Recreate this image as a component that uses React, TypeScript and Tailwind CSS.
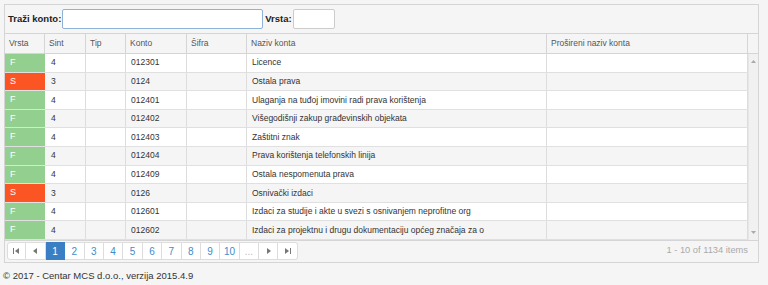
import React from 'react';

interface Konto {
  vrsta: 'F' | 'S';
  sint: string;
  konto: string;
  naziv: string;
}

const rows: Konto[] = [
  { vrsta: 'F', sint: '4', konto: '012301', naziv: 'Licence' },
  { vrsta: 'S', sint: '3', konto: '0124', naziv: 'Ostala prava' },
  { vrsta: 'F', sint: '4', konto: '012401', naziv: 'Ulaganja na tuđoj imovini radi prava korištenja' },
  { vrsta: 'F', sint: '4', konto: '012402', naziv: 'Višegodišnji zakup građevinskih objekata' },
  { vrsta: 'F', sint: '4', konto: '012403', naziv: 'Zaštitni znak' },
  { vrsta: 'F', sint: '4', konto: '012404', naziv: 'Prava korištenja telefonskih linija' },
  { vrsta: 'F', sint: '4', konto: '012409', naziv: 'Ostala nespomenuta prava' },
  { vrsta: 'S', sint: '3', konto: '0126', naziv: 'Osnivački izdaci' },
  { vrsta: 'F', sint: '4', konto: '012601', naziv: 'Izdaci za studije i akte u svezi s osnivanjem neprofitne org' },
  { vrsta: 'F', sint: '4', konto: '012602', naziv: 'Izdaci za projektnu i drugu dokumentaciju općeg značaja za o' },
];

const cols = 'grid grid-cols-[40px_41px_40px_61px_60px_300px_201px]';

const Arrow = ({ dir, bar }: { dir: 'l' | 'r'; bar?: boolean }) => (
  <svg width="7" height="6" viewBox="0 0 7 6" className="fill-[#777]">
    {dir === 'l' ? (
      <>
        {bar && <rect x="0" y="0" width="1" height="6" />}
        <polygon points={bar ? '6,0 6,6 2,3' : '5,0 5,6 1,3'} />
      </>
    ) : (
      <>
        <polygon points={bar ? '1,0 1,6 5,3' : '2,0 2,6 6,3'} />
        {bar && <rect x="6" y="0" width="1" height="6" />}
      </>
    )}
  </svg>
);

const App = () => {
  const pages = ['1', '2', '3', '4', '5', '6', '7', '8', '9', '10', '...'];

  return (
    <div className="w-[768px] h-[285px] bg-[#f5f5f5] pt-[4px] pl-[4px] font-['Liberation_Sans',Arial,sans-serif] text-[#333] overflow-hidden">
      <div className="w-[755px] border border-[#d5d5d5] bg-white">
        {/* toolbar */}
        <div className="h-[29px] bg-[#f5f5f5] border-b border-[#d5d5d5] flex items-center pl-[3px] text-[9.5px] font-bold text-[#222]">
          <span>Traži konto:</span>
          <input className="ml-[1px] w-[201px] h-[20px] bg-white border border-[#8fb3d6] rounded-[2px] outline-none" />
          <span className="ml-[2px]">Vrsta:</span>
          <input className="ml-[1px] w-[42px] h-[20px] bg-white border border-[#ccc] rounded-[2px] outline-none" />
        </div>

        {/* header */}
        <div className="flex h-[20px] bg-[#f5f5f5] border-b border-[#d5d5d5] text-[8.5px] text-[#555]">
          <div className={cols}>
            {['Vrsta', 'Sint', 'Tip', 'Konto', 'Šifra', 'Naziv konta', 'Prošireni naziv konta'].map((h) => (
              <div key={h} className="border-r border-[#d5d5d5] pl-[4px] flex items-center">
                {h}
              </div>
            ))}
          </div>
          <div className="w-[10px]" />
        </div>

        {/* body */}
        <div className="flex">
          <div>
            {rows.map((r, i) => (
              <div
                key={r.konto}
                className={`${cols} h-[18.6px] border-b border-[#e0e0e0] text-[8.5px] ${i % 2 ? 'bg-[#f5f5f5]' : 'bg-white'}`}
              >
                <div className={`flex items-center pl-[5px] text-white text-[9px] ${r.vrsta === 'F' ? 'bg-[#93cf8f]' : 'bg-[#fb5524]'}`}>
                  {r.vrsta}
                </div>
                <div className="flex items-center pl-[6px] border-r border-[#ddd]">{r.sint}</div>
                <div className="border-r border-[#ddd]" />
                <div className="flex items-center pl-[5px] border-r border-[#ddd]">{r.konto}</div>
                <div className="border-r border-[#ddd]" />
                <div className="flex items-center pl-[5px] border-r border-[#ddd] whitespace-nowrap overflow-hidden">{r.naziv}</div>
                <div className="border-r border-[#ddd]" />
              </div>
            ))}
          </div>
          {/* scrollbar */}
          <div className="w-[10px] bg-[#f1f1f1] flex flex-col justify-between items-center py-[6px] border-l border-[#e6e6e6]">
            <svg width="5" height="3" viewBox="0 0 5 3" className="fill-[#aaa]"><polygon points="0,3 5,3 2.5,0" /></svg>
            <svg width="5" height="3" viewBox="0 0 5 3" className="fill-[#aaa]"><polygon points="0,0 5,0 2.5,3" /></svg>
          </div>
        </div>

        {/* pager */}
        <div className="h-[22px] bg-[#f5f5f5] border-t border-[#d5d5d5] flex items-center justify-between pl-[2px] pr-[10px]">
          <div className="flex h-[18px] text-[10px]">
            <button className="w-[19.4px] flex items-center justify-center bg-white border border-[#ddd] rounded-l-[3px]">
              <Arrow dir="l" bar />
            </button>
            <button className="w-[19.4px] flex items-center justify-center bg-white border border-l-0 border-[#ddd]">
              <Arrow dir="l" />
            </button>
            {pages.map((p) => (
              <button
                key={p}
                className={`w-[19.4px] flex items-center justify-center border border-l-0 ${
                  p === '1'
                    ? 'bg-[#3a7fc4] border-[#3a7fc4] text-white'
                    : p === '...'
                      ? 'bg-white border-[#ddd] text-[#bbb]'
                      : 'bg-white border-[#ddd] text-[#428bca]'
                }`}
              >
                {p}
              </button>
            ))}
            <button className="w-[19.4px] flex items-center justify-center bg-white border border-l-0 border-[#ddd]">
              <Arrow dir="r" />
            </button>
            <button className="w-[19.4px] flex items-center justify-center bg-white border border-l-0 border-[#ddd] rounded-r-[3px]">
              <Arrow dir="r" bar />
            </button>
          </div>
          <span className="text-[9.3px] text-[#aaa]">1 - 10 of 1134 items</span>
        </div>
      </div>

      <div className="mt-[6px] -ml-[1px] text-[9.5px] text-[#333]">© 2017 - Centar MCS d.o.o., verzija 2015.4.9</div>
    </div>
  );
};

export default App;
